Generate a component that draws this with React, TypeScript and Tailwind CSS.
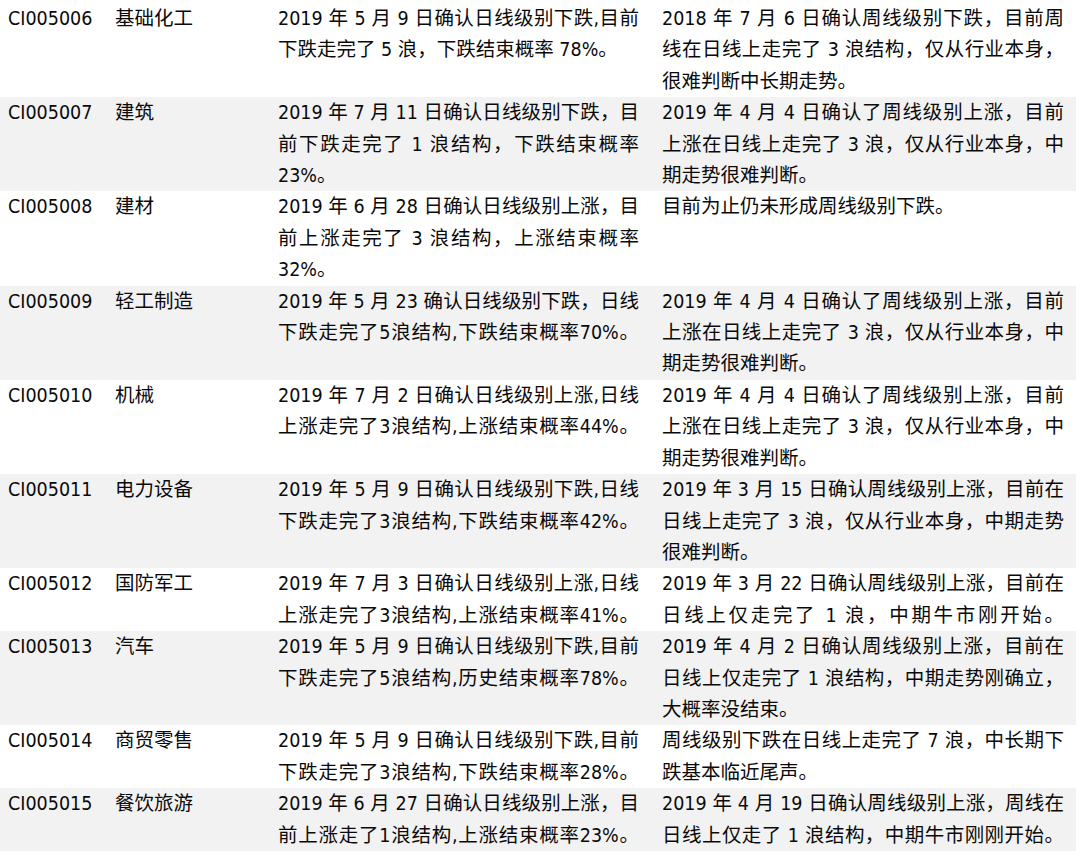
import React from "react";

type Row = {
  code: string;
  name: string;
  c3: string[];
  c3full?: boolean;
  c4: string[];
  c4full?: boolean;
};

const rows: Row[] = [
  {
    code: "CI005006",
    name: "基础化工",
    c3: ["2019 年 5 月 9 日确认日线级别下跌,目前", "下跌走完了 5 浪，下跌结束概率 78%。"],
    c4: ["2018 年 7 月 6 日确认周线级别下跌，目前周", "线在日线上走完了 3 浪结构，仅从行业本身，", "很难判断中长期走势。"],
  },
  {
    code: "CI005007",
    name: "建筑",
    c3: ["2019 年 7 月 11 日确认日线级别下跌，目", "前下跌走完了 1 浪结构，下跌结束概率", "23%。"],
    c4: ["2019 年 4 月 4 日确认了周线级别上涨，目前", "上涨在日线上走完了 3 浪，仅从行业本身，中", "期走势很难判断。"],
  },
  {
    code: "CI005008",
    name: "建材",
    c3: ["2019 年 6 月 28 日确认日线级别上涨，目", "前上涨走完了 3 浪结构，上涨结束概率", "32%。"],
    c4: ["目前为止仍未形成周线级别下跌。"],
  },
  {
    code: "CI005009",
    name: "轻工制造",
    c3: ["2019 年 5 月 23 确认日线级别下跌，日线", "下跌走完了5浪结构,下跌结束概率70%。"],
    c3full: true,
    c4: ["2019 年 4 月 4 日确认了周线级别上涨，目前", "上涨在日线上走完了 3 浪，仅从行业本身，中", "期走势很难判断。"],
  },
  {
    code: "CI005010",
    name: "机械",
    c3: ["2019 年 7 月 2 日确认日线级别上涨,日线", "上涨走完了3浪结构,上涨结束概率44%。"],
    c3full: true,
    c4: ["2019 年 4 月 4 日确认了周线级别上涨，目前", "上涨在日线上走完了 3 浪，仅从行业本身，中", "期走势很难判断。"],
  },
  {
    code: "CI005011",
    name: "电力设备",
    c3: ["2019 年 5 月 9 日确认日线级别下跌,日线", "下跌走完了3浪结构,下跌结束概率42%。"],
    c3full: true,
    c4: ["2019 年 3 月 15 日确认周线级别上涨，目前在", "日线上走完了 3 浪，仅从行业本身，中期走势", "很难判断。"],
  },
  {
    code: "CI005012",
    name: "国防军工",
    c3: ["2019 年 7 月 3 日确认日线级别上涨,日线", "上涨走完了3浪结构,上涨结束概率41%。"],
    c3full: true,
    c4: ["2019 年 3 月 22 日确认周线级别上涨，目前在", "日线上仅走完了 1 浪，中期牛市刚开始。"],
    c4full: true,
  },
  {
    code: "CI005013",
    name: "汽车",
    c3: ["2019 年 5 月 9 日确认日线级别下跌,目前", "下跌走完了5浪结构,历史结束概率78%。"],
    c3full: true,
    c4: ["2019 年 4 月 2 日确认周线级别上涨，目前在", "日线上仅走完了 1 浪结构，中期走势刚确立，", "大概率没结束。"],
  },
  {
    code: "CI005014",
    name: "商贸零售",
    c3: ["2019 年 5 月 9 日确认日线级别下跌,目前", "下跌走完了3浪结构,下跌结束概率28%。"],
    c3full: true,
    c4: ["周线级别下跌在日线上走完了 7 浪，中长期下", "跌基本临近尾声。"],
  },
  {
    code: "CI005015",
    name: "餐饮旅游",
    c3: ["2019 年 6 月 27 日确认日线级别上涨，目", "前上涨走了1浪结构,上涨结束概率23%。"],
    c3full: true,
    c4: ["2019 年 4 月 19 日确认周线级别上涨，周线在", "日线上仅走了 1 浪结构，中期牛市刚刚开始。"],
    c4full: true,
  },
];

function Lines({ lines, full }: { lines: string[]; full?: boolean }) {
  return (
    <>
      {lines.map((l, i) => {
        const justify = i < lines.length - 1 || full;
        return (
          <div
            key={i}
            className={
              justify
                ? "whitespace-nowrap text-justify [text-align-last:justify]"
                : "whitespace-nowrap"
            }
          >
            {l}
          </div>
        );
      })}
    </>
  );
}

export default function App() {
  return (
    <div className="w-[1080px] h-[852px] overflow-hidden bg-white pt-[3px] text-[19.5px] leading-[31.4px] text-[#0a0a0a]">
      <div className="w-[1076px] [font-family:'DejaVu_Sans_Condensed','DejaVu_Sans','Noto_Sans_CJK_SC',sans-serif] [font-stretch:condensed]">
        {rows.map((r, i) => (
          <div
            key={r.code}
            className={`flex ${i % 2 === 1 ? "bg-[#f2f2f2]" : "bg-white"}`}
          >
            <div className="w-[107px] shrink-0 pl-[8px]">{r.code}</div>
            <div className="w-[163px] shrink-0 pl-[8px]">{r.name}</div>
            <div className="w-[384px] shrink-0 pl-[8px] pr-[15px]">
              <Lines lines={r.c3} full={r.c3full} />
            </div>
            <div className="w-[422px] shrink-0 pl-[8px] pr-[12px]">
              <Lines lines={r.c4} full={r.c4full} />
            </div>
          </div>
        ))}
      </div>
    </div>
  );
}
